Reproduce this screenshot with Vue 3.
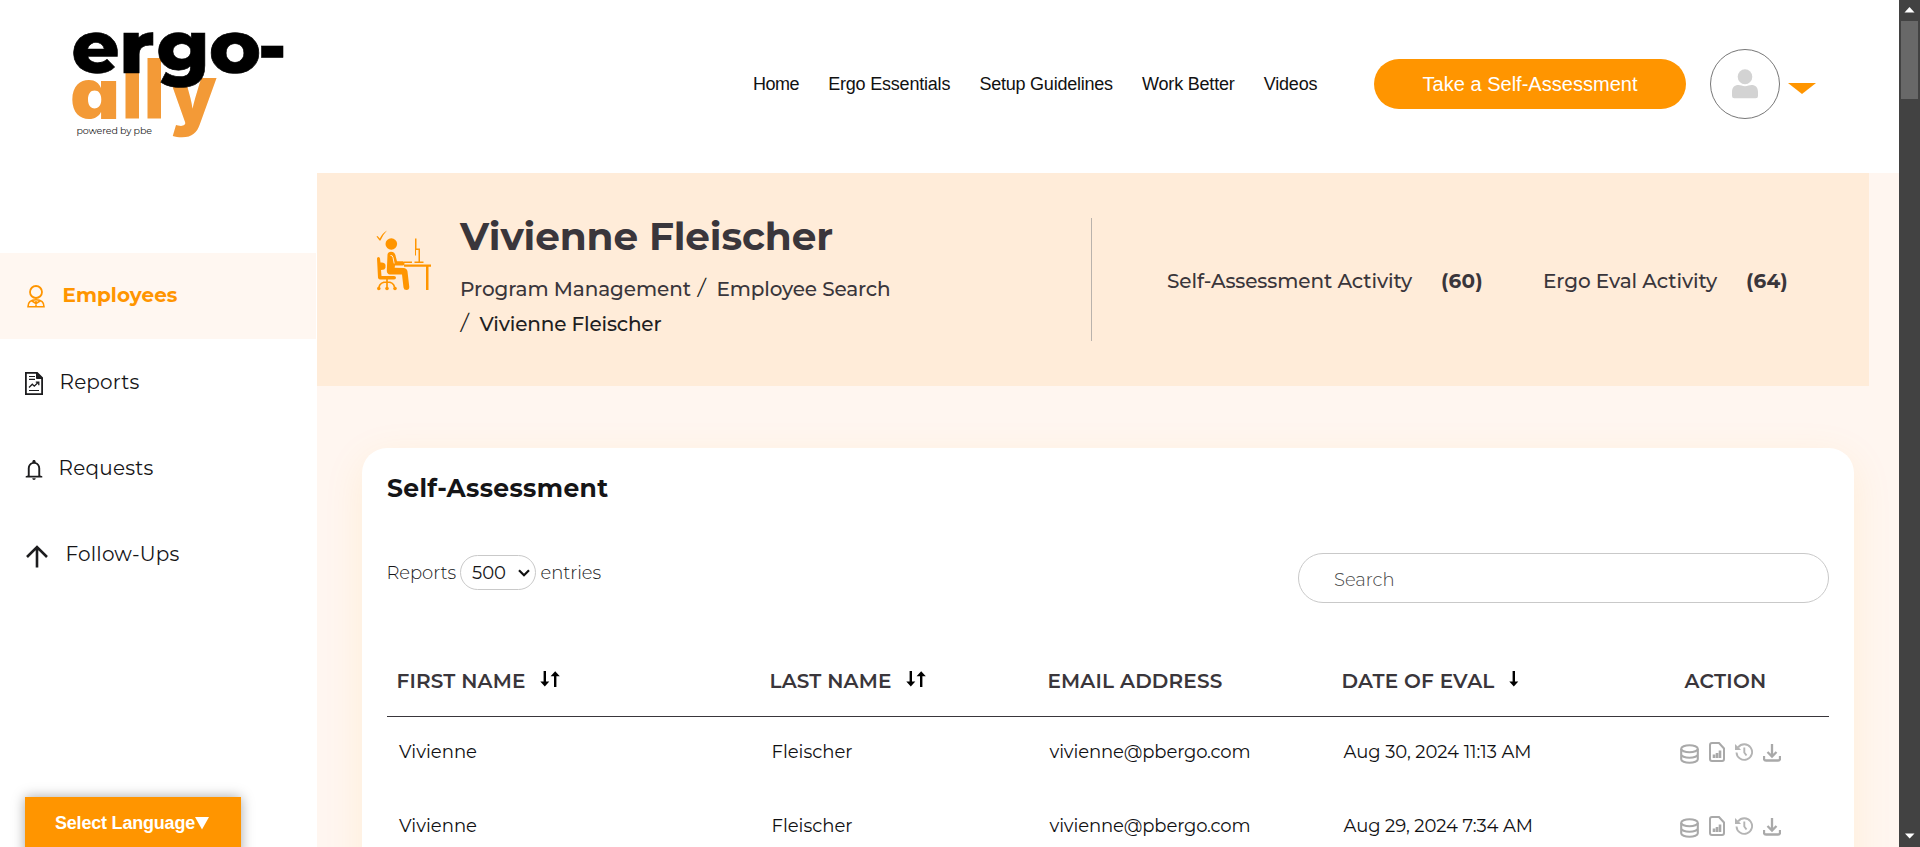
<script setup>
const nav = [
  { label: 'Home', w: 46 },
  { label: 'Ergo Essentials', w: 122 },
  { label: 'Setup Guidelines', w: 133.5 },
  { label: 'Work Better', w: 92.5 },
  { label: 'Videos', w: 53.5 },
]
const menu = [
  { label: 'Employees', icon: 'person', w: 115, active: true },
  { label: 'Reports', icon: 'report', w: 80 },
  { label: 'Requests', icon: 'bell', w: 95 },
  { label: 'Follow-Ups', icon: 'arrow', w: 114 },
]
const columns = [
  { label: 'FIRST NAME', w: 129, sort: 'both' },
  { label: 'LAST NAME', w: 122, sort: 'both' },
  { label: 'EMAIL ADDRESS', w: 175, sort: '' },
  { label: 'DATE OF EVAL', w: 153, sort: 'down' },
  { label: 'ACTION', w: 82, sort: '' },
]
const rows = [
  { date: 'Aug 30, 2024 11:13 AM', w: 188 },
  { date: 'Aug 29, 2024 7:34 AM', w: 189.5 },
]

// Tracks a label so that it fills the given width.
const vFit = {
  mounted(el, { value }) {
    const w = el.getBoundingClientRect().width
    el.style.letterSpacing = (value - w) / el.textContent.length + 'px'
  },
}
</script>

<template>
  <div class="page">
    <div class="app">
      <header class="top">
        <svg class="logo" width="220" height="118" viewBox="68 26 220 118" role="img" aria-label="ergo-ally">
          <g class="ally">
            <text x="70" y="118.500" textLength="50" lengthAdjust="spacingAndGlyphs">a</text>
            <rect x="125.500" y="70" width="13.500" height="48.500" />
            <rect x="147.500" y="58" width="13.500" height="60.500" />
            <text class="y" x="169" y="120.500" textLength="48" lengthAdjust="spacingAndGlyphs">y</text>
          </g>
          <g class="ergo">
            <text x="71.500" y="72.500" textLength="48" lengthAdjust="spacingAndGlyphs">e</text>
            <text x="119" y="72.500" textLength="35.500" lengthAdjust="spacingAndGlyphs">r</text>
            <text x="156.500" y="72.500" textLength="53" lengthAdjust="spacingAndGlyphs">g</text>
            <text x="209" y="72.500" textLength="52" lengthAdjust="spacingAndGlyphs">o</text>
            <rect x="261.500" y="46" width="21.500" height="11.500" />
          </g>
          <text class="powered" x="76.500" y="134" textLength="75.500">powered by pbe</text>
        </svg>
        <nav class="nav">
          <a v-for="n in nav" :key="n.label" v-fit="n.w">{{ n.label }}</a>
        </nav>
        <button class="cta"><span v-fit="215">Take a Self-Assessment</span></button>
        <div class="avatar">
          <svg width="28" height="30" viewBox="0 0 28 30">
            <ellipse cx="14" cy="7.700" rx="7.300" ry="7.500" fill="#d3d3d3" />
            <path d="M1 27v-4c0-4.500 2.500-7 6.500-7 2 0 4 1.200 6.500 1.200s4.500-1.200 6.500-1.200c4 0 6.500 2.500 6.500 7v4q0 2.300-2.300 2.300H3.300Q1 29.300 1 27z" fill="#d3d3d3" />
          </svg>
        </div>
        <svg class="caret" width="28" height="11" viewBox="0 0 28 11"><path d="M0 0h28L14 11z" fill="#ff9500" /></svg>
      </header>

      <div class="body">
        <aside class="side">
          <div v-for="m in menu" :key="m.label" class="item" :class="[m.icon, { active: m.active }]">
            <svg v-if="m.icon === 'person'" width="18" height="23" viewBox="0 0 18 23" fill="none" stroke="#ff9500" stroke-width="1.800">
              <circle cx="9" cy="7" r="6" />
              <path d="M1 21.700c0-4.700 2.700-6.900 8-6.900s8 2.200 8 6.900zM5 16l4 2.500 4-2.500M9 16v5.500" stroke-width="1.600" />
            </svg>
            <svg v-else-if="m.icon === 'report'" width="18" height="23" viewBox="0 0 18 23" fill="none" stroke="#1c1c1e">
              <path d="M.900.900h11.200l5 5v16.200H.900z" stroke-width="1.800" />
              <path d="M11.500 1v5.500H17z" fill="#1c1c1e" />
              <path d="M4 4.500h6M4 7.300h6M4 18.500h10" stroke-width="1.200" />
              <path d="M4 15.500l3.300-3.300 2 2 4-4M10.800 10.200h3v3" stroke-width="1.300" />
            </svg>
            <svg v-else-if="m.icon === 'bell'" width="18" height="20" viewBox="0 0 18 20">
              <path d="M9 0c1 0 1.600.700 1.600 1.600v.600c2.800.700 4.600 3 4.600 6V15.500L17.300 16.200V17.500H.700V16.200l2.100-.700V8.200c0-3 1.800-5.300 4.600-6v-.600C7.400.700 8 0 9 0zM9 3.800C6.300 3.800 4.700 5.700 4.700 8.200v7.600h8.600V8.200C13.300 5.700 11.700 3.800 9 3.800zM7.200 18.300h3.600q-.200 1.700-1.800 1.700t-1.800-1.700z" fill="#1c1c1e" fill-rule="evenodd" />
            </svg>
            <svg v-else width="22" height="23" viewBox="0 0 22 23" fill="none" stroke="#1c1c1e" stroke-width="2.600">
              <path d="M11 22.500V2M1 12L11 2l10 10" />
            </svg>
            <span v-fit="m.w">{{ m.label }}</span>
          </div>
        </aside>

        <main class="main">
          <section class="hero">
            <svg class="desk" width="56" height="61" viewBox="0 0 56 61" fill="#ff9500">
              <path d="M.500 6.500l1-.500 2.300 2.500Q6.500 3 11 .500 7 4.500 4.500 10.500H3.500z" />
              <circle cx="15.300" cy="14" r="5.800" />
              <path d="M11.500 24.500q.500-2.800 3.500-2.800 4 0 4.700 4.500l1.300 5h6q1.500.400 1.500 2.200T27 35.500H19l-.300 2.300 9.300.200q3.200.600 3.500 3.500L33.300 57q0 3-2.800 3-2.700 0-3-2.500L26 44.500H14q-3.300-.500-3.200-4z" />
              <path d="M14.500 25.500q2-.500 2.500 2l1.200 6" fill="none" stroke="#ffecd9" stroke-width="1" />
              <path d="M1 28.500q0-1.500 1.500-1.500 1.300 0 1.500 1.500l.500 4q4.500-.500 5 2.500v2.500q-.500 2.500-4.500 2.500L5.500 46H18q2 0 2 1.700T18 49.500H4q-1.700 0-2-1.700z" />
              <path d="M11 49v10M3 57q1-5 8-5 6.500 0 7.500 5" fill="none" stroke="#ff9500" stroke-width="1.700" />
              <circle cx="2.800" cy="58.500" r="1.800" /><circle cx="11" cy="58.500" r="1.800" /><circle cx="19" cy="58.500" r="1.800" />
              <path d="M28 31.500h8v1.500h-8zM28 34.500h27v2.200h-2.500V60H50V36.700H28zM39 8.500h1.500v10h3.500v13h3.500V33h-9v-1.500h4V20h-2.500v5.500H39z" />
            </svg>
            <div class="who">
              <h1><span v-fit="373">Vivienne Fleischer</span></h1>
              <div class="crumbs">
                <span v-fit="231">Program Management</span><i>/</i><span class="second" v-fit="174">Employee Search</span>
              </div>
              <div class="crumbs">
                <i class="lead">/</i><span class="here" v-fit="182">Vivienne Fleischer</span>
              </div>
            </div>
            <div class="divider"></div>
            <div class="stats">
              <span v-fit="245">Self-Assessment Activity</span><b v-fit="42">(60)</b>
              <span class="ev" v-fit="174">Ergo Eval Activity</span><b v-fit="42">(64)</b>
            </div>
          </section>

          <section class="card">
            <h2><span v-fit="221.500">Self-Assessment</span></h2>
            <div class="tools">
              <div class="entries">
                <span v-fit="69.500">Reports</span>
                <div class="select">
                  <span v-fit="34">500</span>
                  <svg width="12" height="8" viewBox="0 0 12 8"><path d="M1 1.200l5 5 5-5" fill="none" stroke="#111" stroke-width="2.200" /></svg>
                </div>
                <span v-fit="60.500">entries</span>
              </div>
              <div class="search"><span v-fit="60.500">Search</span></div>
            </div>
            <div class="row head">
              <div v-for="c in columns" :key="c.label" class="cell">
                <span v-fit="c.w">{{ c.label }}</span>
                <svg v-if="c.sort" class="sort" :width="c.sort === 'both' ? 20 : 10" height="16" :viewBox="c.sort === 'both' ? '0 0 20 16' : '0 0 10 16'">
                  <path d="M3.600 0h2.400v10.500H9.300L4.800 15.500.300 10.500h3.300z" />
                  <path v-if="c.sort === 'both'" d="M14 16h2.400V5.300h3.400L15.200.300 10.600 5.300H14z" />
                </svg>
              </div>
            </div>
            <div v-for="r in rows" :key="r.date" class="row data">
              <div class="cell"><span v-fit="78">Vivienne</span></div>
              <div class="cell"><span v-fit="81">Fleischer</span></div>
              <div class="cell"><span v-fit="201">vivienne@pbergo.com</span></div>
              <div class="cell"><span v-fit="r.w">{{ r.date }}</span></div>
              <div class="actions">
                <svg class="db" width="19" height="20" viewBox="0 0 19 20" fill="none" stroke="#a9a9a9" stroke-width="2.100">
                  <ellipse cx="9.500" cy="4.700" rx="8.300" ry="3.500" />
                  <path d="M1.200 5v10.200c0 2 3.700 3.600 8.300 3.600s8.300-1.600 8.300-3.600V5M1.200 10.200c0 2 3.700 3.500 8.300 3.500s8.300-1.500 8.300-3.500" />
                </svg>
                <svg class="file" width="16" height="20" viewBox="0 0 16 20" fill="none" stroke="#a9a9a9" stroke-width="2">
                  <path d="M3 1h7l5 5.500V17q0 2-2 2H3q-2 0-2-2V3q0-2 2-2z" />
                  <path d="M5 16v-3.500M8 16v-5M11 16V8.500" stroke-width="2.600" />
                </svg>
                <svg class="hist" width="18" height="18" viewBox="0 0 18 18" fill="none" stroke="#b4b4b4" stroke-width="1.900">
                  <path d="M1.500 9.500a7.800 7.800 0 1 0 1.600-5.200M9.300 4.500V9.500l2.200 3" />
                  <path d="M0 1v6h6L4 4.700z" fill="#b4b4b4" stroke="none" />
                </svg>
                <svg class="down" width="18" height="18" viewBox="0 0 18 18" fill="none" stroke="#a9a9a9" stroke-width="2.300">
                  <path d="M9 0v12M4.500 8L9 12.500 13.500 8M1 12v2.500q0 2 2 2h12q2 0 2-2V12" />
                </svg>
              </div>
            </div>
          </section>
        </main>
      </div>
    </div>

    <div class="scroll">
      <svg width="21" height="21" viewBox="0 0 21 21"><path d="M5.500 12.500h10L10.500 7z" fill="#fff" /></svg>
      <div class="thumb"></div>
      <svg class="end" width="21" height="21" viewBox="0 0 21 21"><path d="M6 7.500h9.500L10.700 12.500z" fill="#fff" /></svg>
    </div>
    <div class="lang"><span v-fit="140">Select Language</span><svg width="14" height="13" viewBox="0 0 14 13"><path d="M0 0h14L7 12.500z" fill="#fff" /></svg></div>
  </div>
</template>

<style>
body { margin: 0; overflow: hidden; }
</style>

<style scoped>
.page { position: relative; display: flex; width: 1920px; height: 847px; overflow: hidden; background: #fff; font-family: Montserrat, Inter, sans-serif; color: #151517; }
.page span, .page b, .page a { display: inline-block; white-space: nowrap; }
svg { display: block; flex: none; }
.app { width: 1899px; flex: none; }
.top { display: flex; height: 173px; box-sizing: border-box; }
.logo { margin: 26px 0 0 68px; overflow: visible; }
.ergo { font-family: Montserrat, Inter, sans-serif; font-weight: 800; font-size: 75px; stroke: #000; stroke-width: 0.6px; }
.ally { font-family: Inter, sans-serif; font-weight: 900; font-size: 70px; font-feature-settings: "cv11"; fill: #f39a37; }
.ally .y { font-size: 78px; }
.powered { font-family: Montserrat, Lato, sans-serif; font-size: 9.500px; fill: #222; }
.nav { display: flex; gap: 29.200px; margin-left: 465px; height: 168px; align-items: center; font: 18px "Liberation Sans", sans-serif; color: #111; }
.cta { width: 312px; height: 50px; margin: 59px 0 0 auto; padding: 0; border: 0; border-radius: 25px; background: #ff9500; color: #fff; font: 20px/49px "Liberation Sans", sans-serif; }
.avatar { width: 70px; height: 70px; box-sizing: border-box; margin: 49px 0 0 24px; border: 1px solid #777; border-radius: 50%; display: flex; justify-content: center; padding-top: 19px; }
.caret { margin: 83px 83px 0 8px; }
.body { display: flex; height: 674px; }
.side { width: 317px; flex: none; padding-top: 80px; box-sizing: border-box; }
.item { display: flex; align-items: center; width: 316px; height: 86px; box-sizing: border-box; padding-left: 25px; font-size: 20px; }
.item.active { background: #fff7f1; color: #ff9500; font-weight: 700; }
.item.person { padding-left: 27px; }
.item span { margin-top: -1px; }
.person svg { margin-top: 1px; }
.report svg { margin-top: 3px; }
.bell svg { margin-top: 4px; }
.arrow svg { margin: 5px 0 0 1px; }
.item.person span { margin: -2px 0 0 17.500px; }
.report span { margin-left: 16.500px; }
.bell span { margin-left: 15.500px; }
.arrow span { margin-left: 17.500px; }
.main { width: 1582px; background: #fff6f0; overflow: hidden; }
.hero { display: flex; width: 1552px; height: 213px; background: #ffecd9; color: #3a363b; }
.desk { margin: 57px 0 0 59px; }
.who { width: 631px; margin-left: 28px; padding-top: 36px; box-sizing: border-box; }
h1 { margin: 0; font-size: 39px; line-height: 55px; font-weight: 700; }
.crumbs { display: flex; height: 35px; line-height: 35px; font-size: 20px; font-weight: 500; margin-left: 0; }
h1 + .crumbs { margin-top: 8px; }
.crumbs i { font: 27px/29px "Open Sans", sans-serif; font-weight: 300; font-style: normal; margin-left: 6px; width: 9px; transform: skewX(-4deg); color: #222; }
.crumbs .lead { margin-left: 0; }
.second { margin-left: 10.500px; }
.here { margin-left: 10.500px; color: #1e1e22; }
.divider { width: 1px; height: 123px; margin: 45px 0 0 0; background: #b9b2ac; }
.stats { display: flex; align-items: center; height: 215px; margin-left: 75px; font-size: 20px; font-weight: 500; }
.stats b { margin-left: 29px; font-weight: 700; }
.stats .ev { margin-left: 60px; }
.card { width: 1492px; height: 600px; box-sizing: border-box; margin: 62px 0 0 45px; padding: 0 25px; border-radius: 25px; background: #fff; box-shadow: 0 10px 40px rgba(255, 170, 20, 0.1); }
h2 { margin: 0; font-size: 25px; line-height: 80px; font-weight: 700; }
.tools { display: flex; justify-content: space-between; padding-top: 25px; }
.entries { display: flex; align-items: center; height: 39px; font-size: 18px; font-weight: 300; margin-left: -0.500px; }
.select { display: flex; align-items: center; width: 76px; height: 35px; box-sizing: border-box; margin: 0 4.500px 0 4px; padding-left: 11px; border: 1px solid #c9c9c9; border-radius: 17.500px; font-weight: 400; }
.select svg { margin-left: 12px; }
.search { width: 531px; height: 50px; box-sizing: border-box; padding: 2px 0 0 35px; border: 1px solid #c9c9c9; border-radius: 25px; line-height: 48px; font-size: 18px; font-weight: 300; color: #444; }
.row { display: grid; grid-template-columns: 373px 278px 294px 343px 154px; }
.head { height: 71px; box-sizing: border-box; margin-top: 43px; border-bottom: 1px solid #39363b; font-size: 20px; font-weight: 600; color: #3a363b; }
.cell { display: flex; align-items: center; padding-left: 11.500px; }
.head .cell { padding-left: 9.500px; }
.sort { margin: -5px 0 0 14px; fill: #000; }
.data { height: 74px; padding-bottom: 4px; box-sizing: border-box; font-size: 18px; color: #101012; }
.data .cell:first-child { padding-left: 12px; }
.actions { display: flex; align-items: flex-start; padding-left: 5px; }
.db { margin-top: 27px; }
.file { margin: 25px 0 0 10px; }
.hist { margin: 26px 0 0 10px; }
.down { margin: 27px 0 0 9.500px; }
.scroll { width: 21px; flex: none; background: #424242; display: flex; flex-direction: column; }
.thumb { width: 17px; height: 78px; margin: 0 0 0 2px; background: #686868; }
.scroll .end { margin-top: auto; }
.lang { position: absolute; left: 25px; top: 797px; width: 216px; height: 60px; box-sizing: border-box; padding-left: 30px; display: flex; background: #ff9500; color: #fff; font: bold 18px/52px "Liberation Sans", sans-serif; box-shadow: 0 0 12px rgba(0, 0, 0, 0.35); }
.lang svg { margin: 20px 0 0 0; }
</style>
